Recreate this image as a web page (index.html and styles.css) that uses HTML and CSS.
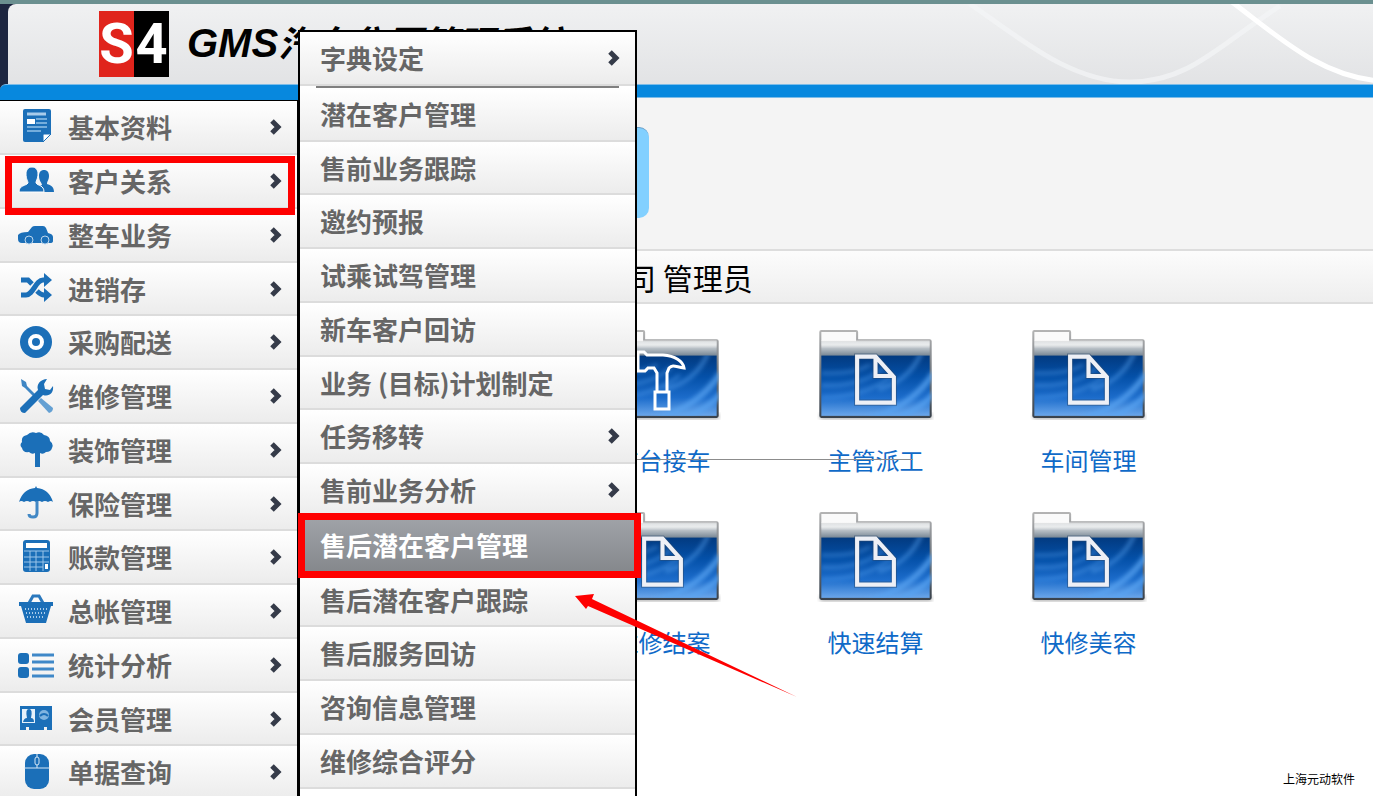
FILE: index.html
```
<!DOCTYPE html>
<html lang="zh-CN">

<head>
    <meta charset="UTF-8">
    <meta name="viewport" content="width=device-width, initial-scale=1.0">
    <title>GMS汽车集团管理系统</title>
    <link rel="stylesheet" href="styles.css">
</head>

<body>
    <!-- Shared icons -->
    <svg class="sprite" width="0" height="0" aria-hidden="true">
        <defs>
            <linearGradient id="metal" x1="0" y1="0" x2="0" y2="1">
                <stop offset="0" stop-color="#c9ced2" />
                <stop offset="0.25" stop-color="#d5d9dc" />
                <stop offset="1" stop-color="#6f7f8e" />
            </linearGradient>
            <linearGradient id="tab" x1="0" y1="0" x2="0" y2="1">
                <stop offset="0" stop-color="#f2f2f2" />
                <stop offset="0.5" stop-color="#ffffff" />
                <stop offset="1" stop-color="#ffffff" stop-opacity="0" />
            </linearGradient>
            <linearGradient id="blue" x1="0" y1="0" x2="0" y2="1">
                <stop offset="0" stop-color="#023a80" />
                <stop offset="0.35" stop-color="#0450a8" />
                <stop offset="0.7" stop-color="#1c6ccb" />
                <stop offset="1" stop-color="#6aa6ea" />
            </linearGradient>
            <linearGradient id="rim" x1="0" y1="0" x2="0" y2="1">
                <stop offset="0" stop-color="#b4b4b4" />
                <stop offset="0.5" stop-color="#6c737b" />
                <stop offset="1" stop-color="#39424c" />
            </linearGradient>
            <filter id="soft" x="-20%" y="-20%" width="140%" height="140%">
                <feGaussianBlur stdDeviation="2" />
            </filter>
            <clipPath id="glass">
                <rect x="4" y="27" width="108" height="59" />
            </clipPath>
        </defs>
        <symbol id="arrow" viewBox="0 0 14 18">
            <path d="M3 3l6 6-6 6" fill="none" stroke="#353b49" stroke-width="5" />
        </symbol>
        <symbol id="folder" viewBox="0 0 114 92">
            <rect x="3" y="84" width="109" height="5" fill="#000" opacity="0.35" filter="url(#soft)" />
            <path d="M2 4q0-2 2-2h34q2 0 2 2v7h70q2 0 2 2v73q0 2-2 2H4q-2 0-2-2z" fill="url(#rim)" />
            <path d="M4 13h106v15H4z" fill="url(#metal)" />
            <path d="M4 4h34v9H4z" fill="#fafafa" />
            <path d="M4 12h106v8H4z" fill="url(#tab)" opacity="0.5" />
            <rect x="4" y="27" width="106" height="59" fill="url(#blue)" />
            <g clip-path="url(#glass)">
                <g fill="none" stroke="#5aa4f2" filter="url(#soft)">
                    <path d="M4 44q30 2 48-8M4 56q40 2 62-18M4 68q44 0 70-22" stroke-width="3" opacity="0.45" />
                    <path d="M48 90q44-12 66-46M70 90q30-8 46-28" stroke-width="6" opacity="0.75" />
                    <path d="M60 60q30-8 42-36" stroke-width="4" opacity="0.5" />
                </g>
            </g>
        </symbol>
        <symbol id="page" viewBox="0 0 114 92">
            <path d="M39 28h18l18 20v25H39zM57 29v18h18" fill="none" stroke="#27476e" stroke-width="6" opacity="0.5" />
            <path d="M39 28h18l18 20v25H39zM57 29v18h18" fill="none" stroke="#eef0f6" stroke-width="4" />
        </symbol>
        <symbol id="hammer" viewBox="0 0 117 94">
            <path d="M34 24h6l3 3h16c12 1 20 6 21 13-8-1-11-4-15 0l-2 5v19H53V45l-3-5h-6l-3 3h-7zM51 64h14v17H51z" fill="none" stroke="#fff" stroke-width="3" />
        </symbol>
    </svg>

    <header class="header">
        <div class="banner">
            <svg class="waves" viewBox="0 0 413 80" width="413" height="80" fill="none" aria-hidden="true">
                <path d="M10 0C60 34 110 78 170 78S260 40 320 2" stroke="#f4f5f6" stroke-width="5" opacity="0.7" />
                <path d="M272 -2C320 34 360 72 420 77" stroke="#fff" stroke-width="5" />
            </svg>
            <div class="logo"><span class="logo-s">S</span><span class="logo-4">4</span></div>
            <h1 class="system-name">GMS<span>汽车集团管理系统</span></h1>
        </div>
        <div class="blue-bar"></div>
    </header>

    <div class="main">
        <!-- Main menu -->
        <nav class="sidebar">
            <ul class="menu">
                <li><a href="#">
                    <svg class="icon" viewBox="0 0 36 36"><path d="M7 0h24q2 0 2 2v23l-8 8H7q-2 0-2-2V2q0-2 2-2z" /><path d="M25 33v-7q0-1 1-1h7z" fill="#fff" stroke="#1b6fb8" /><path d="M9 5h19" stroke="#a9cceb" stroke-width="3" /><path d="M9 10h8v5H9z" fill="#fff" /><path d="M18 10h11M18 14h11M9 18h20M9 22h14" stroke="#74addc" stroke-width="2" /></svg>
                    <span>基本资料</span><svg class="arrow"><use href="#arrow" /></svg></a></li>
                <li class="marked"><a href="#">
                    <svg class="icon" viewBox="0 0 36 36"><path d="M20 29c0-6 2-6 4-7 0-2-3-4-3-9 0-4 2-6 5-6s5 2 5 6-2 5-2 8c4 1 7 3 7 8z" /><path d="M1 29c0-7 7-6 9-9 0-2-2-4-2-9 0-4 2-7 6-7s6 3 6 7c0 5-2 6-2 9 2 3 8 2 8 9z" stroke="#fff" stroke-width="1" /></svg>
                    <span>客户关系</span><svg class="arrow"><use href="#arrow" /></svg></a></li>
                <li><a href="#">
                    <svg class="icon" viewBox="0 0 36 36"><path d="M0 18q2-3 10-3l4-5q1-1 3-1h8q2 0 3 2l2 5q5 1 5 4v4q0 2-3 2H4q-4 0-4-4z" /><circle cx="11" cy="23" r="4" stroke="#bcd6ec" stroke-width="1" /><circle cx="27" cy="23" r="4" stroke="#bcd6ec" stroke-width="1" /></svg>
                    <span>整车业务</span><svg class="arrow"><use href="#arrow" /></svg></a></li>
                <li><a href="#">
                    <svg class="icon" viewBox="0 0 36 36"><path d="M3 9h7l4 4M3 24h5c7 0 10-15 17-15h4M19 20q4 4 7 4h3" fill="none" stroke="#1b6fb8" stroke-width="5" /><path d="M26 2l8 7-8 7zM26 17l8 7-8 7z" /></svg>
                    <span>进销存</span><svg class="arrow"><use href="#arrow" /></svg></a></li>
                <li><a href="#">
                    <svg class="icon" viewBox="0 0 36 36"><circle cx="18" cy="18" r="16" /><circle cx="18" cy="18" r="6" stroke="#fff" stroke-width="4" /></svg>
                    <span>采购配送</span><svg class="arrow"><use href="#arrow" /></svg></a></li>
                <li><a href="#">
                    <svg class="icon" viewBox="0 0 36 36"><path d="M3 1l5 3 1 4 11 11-2 2L7 10 4 8z" fill="#3f86c4" /><path d="M23 20l12 10q0 4-4 5L20 23z" fill="#64a0d3" /><path d="M2 30l18-18c-2-6 3-11 9-11l-3 5 1 5 5 1 3-4c1 7-4 11-10 9L7 35q-5 0-5-5z" /></svg>
                    <span>维修管理</span><svg class="arrow"><use href="#arrow" /></svg></a></li>
                <li><a href="#">
                    <svg class="icon" viewBox="0 0 36 36"><path d="M9 3q4-4 9-2 5-2 8 2 6 1 6 6 4 3 2 7-1 4-6 4-3 3-6 1v14h-5V21q-3 2-6-1-6 1-7-4-3-3 0-6-1-6 5-7z" /></svg>
                    <span>装饰管理</span><svg class="arrow"><use href="#arrow" /></svg></a></li>
                <li><a href="#">
                    <svg class="icon" viewBox="0 0 36 36"><path d="M18 0l1 2q12 1 16 14-2-2-5 0-3-2-6 0-3-2-6 0-3-2-6 0-3-2-6 0-3-2-5 0Q5 3 17 2z" /><path d="M19 15v12q0 4-4 4t-4-3" fill="none" stroke="#4288c5" stroke-width="3" /></svg>
                    <span>保险管理</span><svg class="arrow"><use href="#arrow" /></svg></a></li>
                <li><a href="#">
                    <svg class="icon" viewBox="0 0 36 36"><rect x="5" y="1" width="27" height="32" rx="3" /><path d="M8 4h21v5H8z" fill="#fff" /><path d="M6 12h25M6 18h25M6 23h25M12 12v20M18 12v20M25 12v20M6 28h19" stroke="#9bc5e9" stroke-width="1" /><path d="M27 25h3v5h-3z" fill="#fff" /></svg>
                    <span>账款管理</span><svg class="arrow"><use href="#arrow" /></svg></a></li>
                <li><a href="#">
                    <svg class="icon" viewBox="0 0 36 36"><path d="M11 10l4-7h6l4 7" fill="none" stroke="#2a78bd" stroke-width="3" /><path d="M1 9h34v4h-2l-5 17H8L3 13H1z" /><path d="M7 16h22M8 20h20M9 24h18" stroke="#a9cceb" stroke-width="2" stroke-dasharray="1 2" /></svg>
                    <span>总帐管理</span><svg class="arrow"><use href="#arrow" /></svg></a></li>
                <li><a href="#">
                    <svg class="icon" viewBox="0 0 36 36"><rect x="0" y="6" width="11" height="11" rx="3" /><rect x="0" y="20" width="11" height="11" rx="3" /><path d="M14 8h22M14 15h22M14 22h22M14 29h22" stroke="#3f88c8" stroke-width="3" /></svg>
                    <span>统计分析</span><svg class="arrow"><use href="#arrow" /></svg></a></li>
                <li><a href="#">
                    <svg class="icon" viewBox="0 0 36 36"><path d="M2 5h32v24h-5v-3h-3v3H11v-3H8v3H2z" /><path d="M4 8h13v14H4z" fill="#e4f0fa" /><path d="M5 21q1-4 4-4-2-9 2-9t2 9q3 0 3 4z" /><circle cx="26" cy="14" r="5" fill="#7fb4e0" /><path d="M22 15q4-4 8 0" stroke="#1b6fb8" fill="none" stroke-width="2" /></svg>
                    <span>会员管理</span><svg class="arrow"><use href="#arrow" /></svg></a></li>
                <li><a href="#">
                    <svg class="icon" viewBox="0 0 36 36"><rect x="7" y="0" width="24" height="35" rx="9" /><path d="M6 14h26M19 0v14" stroke="#d7e8f6" stroke-width="1" /><rect x="17" y="3" width="4" height="8" rx="2" stroke="#d7e8f6" stroke-width="1" /></svg>
                    <span>单据查询</span><svg class="arrow"><use href="#arrow" /></svg></a></li>
            </ul>
        </nav>

        <!-- Work area -->
        <main class="content">
            <div class="top-panel">
                <div class="blue-box"></div>
            </div>
            <h2 class="user-bar">公司 管理员</h2>
            <div class="folders">
                <a class="folder" href="#"><svg width="117" height="94"><use href="#folder" /><use href="#hammer" /></svg><span>前台接车</span></a>
                <a class="folder" href="#"><svg width="117" height="94"><use href="#folder" /><use href="#page" /></svg><span>主管派工</span></a>
                <a class="folder" href="#"><svg width="117" height="94"><use href="#folder" /><use href="#page" /></svg><span>车间管理</span></a>
                <a class="folder" href="#"><svg width="117" height="94"><use href="#folder" /><use href="#page" /></svg><span>维修结案</span></a>
                <a class="folder" href="#"><svg width="117" height="94"><use href="#folder" /><use href="#page" /></svg><span>快速结算</span></a>
                <a class="folder" href="#"><svg width="117" height="94"><use href="#folder" /><use href="#page" /></svg><span>快修美容</span></a>
            </div>
            <div class="thin-line"></div>
        </main>
    </div>

    <!-- Submenu of 客户关系 -->
    <nav class="submenu">
        <ul class="menu">
            <li><a href="#"><span>字典设定</span><svg class="arrow"><use href="#arrow" /></svg></a></li>
            <li class="divider"></li>
            <li><a href="#"><span>潜在客户管理</span></a></li>
            <li><a href="#"><span>售前业务跟踪</span></a></li>
            <li><a href="#"><span>邀约预报</span></a></li>
            <li><a href="#"><span>试乘试驾管理</span></a></li>
            <li><a href="#"><span>新车客户回访</span></a></li>
            <li><a href="#"><span>业务 (目标)计划制定</span></a></li>
            <li><a href="#"><span>任务移转</span><svg class="arrow"><use href="#arrow" /></svg></a></li>
            <li><a href="#"><span>售前业务分析</span><svg class="arrow"><use href="#arrow" /></svg></a></li>
            <li class="marked active"><a href="#"><span>售后潜在客户管理</span></a></li>
            <li><a href="#"><span>售后潜在客户跟踪</span></a></li>
            <li><a href="#"><span>售后服务回访</span></a></li>
            <li><a href="#"><span>咨询信息管理</span></a></li>
            <li><a href="#"><span>维修综合评分</span></a></li>
        </ul>
    </nav>

    <svg class="pointer" viewBox="0 0 222 104" width="222" height="104" aria-hidden="true">
        <path d="M0 2L19 0 17 5 222 103 13 12 11 15z" fill="#fe0000" />
    </svg>

    <p class="company">上海元动软件</p>
</body>

</html>
```
FILE: styles.css
```
* {
    box-sizing: border-box;
}

body {
    position: relative;
    display: flex;
    flex-direction: column;
    height: 100vh;
    margin: 0;
    overflow: hidden;
    background-color: white;
    font-family: "Noto Sans CJK SC", sans-serif;
}

a {
    text-decoration: none;
}

.sprite {
    position: absolute;
}

/* Header */

.header {
    flex: none;
    border-top: 4px solid #6b9090;
    background-color: #1d2640;
}

.banner {
    position: relative;
    display: flex;
    align-items: center;
    height: 80px;
    margin-left: 8px;
    padding-left: 91px;
    border-radius: 8px 0 0 0;
    background: linear-gradient(#f0f1f2, #e2e3e5);
}

.waves {
    position: absolute;
    top: 0;
    right: 0;
}

.logo {
    display: flex;
    height: 66px;
    color: white;
    font: bold 56px/66px Roboto, sans-serif;
}

.logo span {
    display: flex;
    justify-content: center;
    width: 35px;
}

.logo-s {
    background-color: #e0241c;
}

.logo-4 {
    background-color: black;
}

.system-name {
    margin: 0 0 0 18px;
    color: black;
    font: italic bold 40px/60px "Liberation Sans", "Noto Sans CJK SC", sans-serif;
    white-space: nowrap;
}

.system-name span {
    font-size: 36px;
}

.blue-bar {
    height: 14px;
    border-top: 1px solid #7cbce8;
    border-bottom: 1px solid #7cbce8;
    border-radius: 6px 0 0 0;
    background-color: #0788de;
}

/* Menus */

.main {
    display: flex;
    flex: 1;
    min-height: 0;
}

.sidebar {
    position: relative;
    flex: none;
    width: 298px;
    margin-top: -1px;
    padding-top: 3px;
    background-color: #0788de;
}

.sidebar .menu {
    border-top: 1px solid black;
    border-right: 1px solid black;
}

.menu {
    margin: 0;
    padding: 0;
    list-style: none;
}

.menu li {
    position: relative;
    height: 54px;
    border-bottom: 2px solid #dcdcdc;
    background: linear-gradient(#ffffff, #ececec);
}

.menu li:nth-child(4n) {
    height: 53px;
}

.menu a {
    display: flex;
    align-items: center;
    height: 100%;
    padding: 0 14px 0 18px;
    color: #666666;
    font-size: 26px;
    font-weight: bold;
    line-height: 40px;
}

.menu span {
    flex: 1;
}

.icon {
    width: 36px;
    height: 36px;
    margin-right: 14px;
    fill: #1b6fb8;
}

.arrow {
    width: 14px;
    height: 18px;
}

.submenu {
    position: absolute;
    top: 30px;
    bottom: 0;
    left: 298px;
    width: 339px;
    border: 2px solid black;
    border-bottom: none;
    background-color: white;
}

.submenu a {
    padding: 0 14px 0 20px;
}

.menu .divider {
    height: 2px;
    margin: 0 16px;
    border: none;
    background: #808080;
}

.menu .active {
    height: 56px;
    border-bottom-color: #85888c;
    background: linear-gradient(#a0a3a8, #85888c);
}

.active a {
    color: white;
}

/* Red frames */

.marked::after {
    content: "";
    position: absolute;
    z-index: 1;
    top: 1px;
    right: 2px;
    bottom: -8px;
    left: 5px;
    border: 7px solid #fe0000;
}

.submenu .marked::after {
    top: -5px;
    right: -6px;
    bottom: -6px;
    left: -2px;
}

.pointer {
    position: absolute;
    top: 594px;
    left: 575px;
}

/* Work area */

.content {
    position: relative;
    flex: 1;
}

.top-panel {
    height: 151px;
    padding-top: 29px;
    background-color: #f4f4f4;
}

.blue-box {
    width: 351px;
    height: 91px;
    border-top: 1px solid #6a9fc8;
    border-radius: 10px;
    background-color: #82d0ff;
}

.user-bar {
    height: 55px;
    margin: 0;
    padding-left: 298px;
    border-top: 2px solid #dddddd;
    border-bottom: 2px solid #dddddd;
    background: linear-gradient(#fcfcfc, #eeeeee);
    color: black;
    font-size: 30px;
    font-weight: normal;
    line-height: 52px;
}

.folders {
    display: grid;
    grid-template-columns: repeat(3, 213px);
    padding: 24px 0 0 258px;
}

.folder {
    display: flex;
    flex-direction: column;
    align-items: center;
    height: 182px;
    color: #0f6ac8;
    font-size: 24px;
    line-height: 36px;
}

.folder span {
    margin-top: 20px;
}

.thin-line {
    position: absolute;
    top: 361px;
    left: 337px;
    width: 278px;
    height: 1px;
    background-color: #8c8c8c;
}

.company {
    position: absolute;
    right: 18px;
    bottom: 8px;
    margin: 0;
    color: black;
    font-size: 12px;
    line-height: 18px;
}
```
